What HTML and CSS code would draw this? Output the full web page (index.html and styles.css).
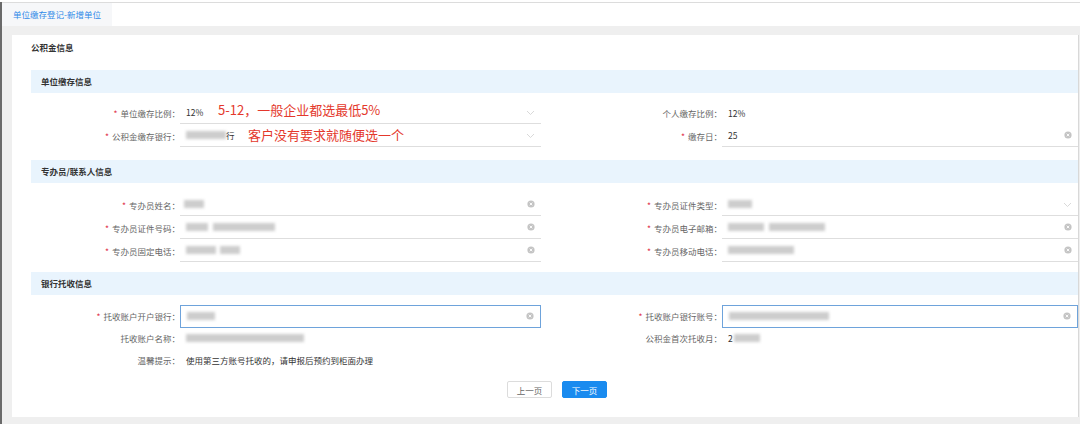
FILE: index.html
```html
<!DOCTYPE html>
<html lang="zh-CN">
<head>
    <meta charset="UTF-8">
    <meta name="viewport" content="width=device-width, initial-scale=1.0">
    <title>单位缴存登记-新增单位</title>
    <link rel="stylesheet" href="styles.css">
</head>
<body>
    <div class="frame">
        <!-- Tabs -->
        <div class="tab-bar">
            <div class="tab active">单位缴存登记-新增单位</div>
        </div>

        <div class="page">
            <div class="card">
                <div class="card-title">公积金信息</div>

                <!-- 单位缴存信息 -->
                <div class="section-head">单位缴存信息</div>
                <div class="form-grid">
                    <div class="label"><span class="req">*</span>单位缴存比例：</div>
                    <div class="field line">
                        <span class="value">12%</span>
                        <span class="note note-a">5-12，一般企业都选最低5%</span>
                        <svg class="chevron" width="9" height="6" viewBox="0 0 9 6"><polyline points="1,1 4.5,4.5 8,1" fill="none" stroke="#cfcfcf" stroke-width="0.8"/></svg>
                    </div>
                    <div class="label">个人缴存比例：</div>
                    <div class="field"><span class="value">12%</span></div>

                    <div class="label"><span class="req">*</span>公积金缴存银行：</div>
                    <div class="field line">
                        <span class="mask" style="width:40px"></span><span class="value">行</span>
                        <span class="note note-b">客户没有要求就随便选一个</span>
                        <svg class="chevron" width="9" height="6" viewBox="0 0 9 6"><polyline points="1,1 4.5,4.5 8,1" fill="none" stroke="#cfcfcf" stroke-width="0.8"/></svg>
                    </div>
                    <div class="label"><span class="req">*</span>缴存日：</div>
                    <div class="field line">
                        <span class="value">25</span>
                        <svg class="clear" width="8" height="8" viewBox="0 0 8 8"><circle cx="4" cy="4" r="3.6" fill="#c4c4c4"/><path d="M2.7 2.7 L5.3 5.3 M5.3 2.7 L2.7 5.3" stroke="#fff" stroke-width="0.9"/></svg>
                    </div>
                </div>

                <!-- 专办员/联系人信息 -->
                <div class="section-head">专办员/联系人信息</div>
                <div class="form-grid">
                    <div class="label"><span class="req">*</span>专办员姓名：</div>
                    <div class="field line">
                        <span class="mask" style="width:20px;margin-left:-2px"></span>
                        <svg class="clear" width="8" height="8" viewBox="0 0 8 8"><circle cx="4" cy="4" r="3.6" fill="#c4c4c4"/><path d="M2.7 2.7 L5.3 5.3 M5.3 2.7 L2.7 5.3" stroke="#fff" stroke-width="0.9"/></svg>
                    </div>
                    <div class="label"><span class="req">*</span>专办员证件类型：</div>
                    <div class="field line">
                        <span class="mask" style="width:24px"></span>
                        <svg class="chevron" width="9" height="6" viewBox="0 0 9 6"><polyline points="1,1 4.5,4.5 8,1" fill="none" stroke="#cfcfcf" stroke-width="0.8"/></svg>
                    </div>

                    <div class="label"><span class="req">*</span>专办员证件号码：</div>
                    <div class="field line">
                        <span class="mask" style="width:22px"></span><span class="mask" style="width:62px;margin-left:5px"></span>
                        <svg class="clear" width="8" height="8" viewBox="0 0 8 8"><circle cx="4" cy="4" r="3.6" fill="#c4c4c4"/><path d="M2.7 2.7 L5.3 5.3 M5.3 2.7 L2.7 5.3" stroke="#fff" stroke-width="0.9"/></svg>
                    </div>
                    <div class="label"><span class="req">*</span>专办员电子邮箱：</div>
                    <div class="field line">
                        <span class="mask" style="width:36px"></span><span class="mask" style="width:56px;margin-left:5px"></span>
                        <svg class="clear" width="8" height="8" viewBox="0 0 8 8"><circle cx="4" cy="4" r="3.6" fill="#c4c4c4"/><path d="M2.7 2.7 L5.3 5.3 M5.3 2.7 L2.7 5.3" stroke="#fff" stroke-width="0.9"/></svg>
                    </div>

                    <div class="label"><span class="req">*</span>专办员固定电话：</div>
                    <div class="field line">
                        <span class="mask" style="width:30px"></span><span class="mask" style="width:20px;margin-left:4px"></span>
                        <svg class="clear" width="8" height="8" viewBox="0 0 8 8"><circle cx="4" cy="4" r="3.6" fill="#c4c4c4"/><path d="M2.7 2.7 L5.3 5.3 M5.3 2.7 L2.7 5.3" stroke="#fff" stroke-width="0.9"/></svg>
                    </div>
                    <div class="label"><span class="req">*</span>专办员移动电话：</div>
                    <div class="field line">
                        <span class="mask" style="width:66px"></span>
                        <svg class="clear" width="8" height="8" viewBox="0 0 8 8"><circle cx="4" cy="4" r="3.6" fill="#c4c4c4"/><path d="M2.7 2.7 L5.3 5.3 M5.3 2.7 L2.7 5.3" stroke="#fff" stroke-width="0.9"/></svg>
                    </div>
                </div>

                <!-- 银行托收信息 -->
                <div class="section-head">银行托收信息</div>
                <div class="form-grid compact">
                    <div class="label"><span class="req">*</span>托收账户开户银行：</div>
                    <div class="field">
                        <div class="input-box">
                            <span class="mask" style="width:28px"></span>
                            <svg class="clear" width="8" height="8" viewBox="0 0 8 8"><circle cx="4" cy="4" r="3.6" fill="#c4c4c4"/><path d="M2.7 2.7 L5.3 5.3 M5.3 2.7 L2.7 5.3" stroke="#fff" stroke-width="0.9"/></svg>
                        </div>
                    </div>
                    <div class="label"><span class="req">*</span>托收账户银行账号：</div>
                    <div class="field">
                        <div class="input-box">
                            <span class="mask" style="width:100px"></span>
                            <svg class="clear" width="8" height="8" viewBox="0 0 8 8"><circle cx="4" cy="4" r="3.6" fill="#c4c4c4"/><path d="M2.7 2.7 L5.3 5.3 M5.3 2.7 L2.7 5.3" stroke="#fff" stroke-width="0.9"/></svg>
                        </div>
                    </div>

                    <div class="label">托收账户名称：</div>
                    <div class="field"><span class="mask" style="width:118px"></span></div>
                    <div class="label">公积金首次托收月：</div>
                    <div class="field"><span class="value">2</span><span class="mask" style="width:26px;margin-left:1px"></span></div>

                    <div class="label">温馨提示：</div>
                    <div class="field"><span class="value">使用第三方账号托收的，请申报后预约到柜面办理</span></div>
                </div>

                <div class="actions">
                    <button class="btn">上一页</button>
                    <button class="btn btn-primary">下一页</button>
                </div>
            </div>
        </div>
    </div>
</body>
</html>
```

FILE: styles.css
```css
body {
    margin: 0;
    padding: 2px 0 0 0;
    background: #fff;
    font-family: "Noto Sans CJK SC", "Noto Sans", sans-serif;
    font-size: 8.5px;
    color: #333;
}

.frame {
    width: 1078px;
    height: 422px;
    border-left: 2px solid #6a6a6a;
    display: flex;
    flex-direction: column;
}

/* Tabs */
.tab-bar {
    height: 23px;
    border-top: 1px solid #dcdcdc;
    display: flex;
    background: #fff;
}

.tab {
    padding: 0 11px;
    line-height: 23px;
    background: #f6f7f9;
    color: #2f8ae8;
}

/* Page + card */
.page {
    flex: 1;
    background: #efefef;
    padding: 9px 0 5px 10px;
}

.card {
    width: 1047px;
    height: 382px;
    background: #fff;
    padding-left: 19px;
    border-right: 1px solid #d8d8d8;
}

.card-title {
    height: 24px;
    line-height: 24px;
    margin-bottom: 11px;
    font-weight: bold;
    color: #333;
}

.section-head {
    height: 23px;
    line-height: 23px;
    padding-left: 10px;
    background: #e9f4fd;
    font-weight: bold;
    color: #333;
}

/* Form grid */
.form-grid {
    display: grid;
    grid-template-columns: 149px 361px 181px 356px;
    grid-auto-rows: 23px;
    padding: 8px 0 13px 0;
}

.section-head + .form-grid + .section-head + .form-grid {
    padding: 10px 0 10px 0;
}

.form-grid.compact {
    grid-auto-rows: 22px;
    padding: 10px 0 13px 0;
}

.label {
    display: flex;
    align-items: center;
    justify-content: flex-end;
    color: #666;
    white-space: nowrap;
}

.req {
    color: #e0334a;
    margin-right: 3px;
}

.field {
    position: relative;
    display: flex;
    align-items: center;
    padding-left: 6px;
    box-sizing: border-box;
}

.field.line {
    border-bottom: 1px solid #dedede;
}

.value {
    color: #333;
    white-space: nowrap;
}

.mask {
    display: inline-block;
    height: 8px;
    background: #cdcdcd;
    filter: blur(1.6px);
}

.chevron {
    position: absolute;
    right: 6px;
    top: 9px;
}

.clear {
    position: absolute;
    right: 6px;
    top: 7px;
}

.input-box {
    position: relative;
    flex: 1;
    height: 21px;
    margin-left: -6px;
    padding-left: 6px;
    border: 1px solid #6ea3db;
    display: flex;
    align-items: center;
}

.input-box .clear {
    top: 6px;
}

/* Red annotations */
.note {
    position: absolute;
    color: #e4382c;
    font-size: 13px;
    white-space: nowrap;
}

.note-a {
    left: 38px;
    top: -1px;
}

.note-b {
    left: 68px;
    top: 1px;
}

/* Buttons */
.actions {
    display: flex;
    justify-content: center;
    gap: 10px;
    padding-left: 5px;
}

.btn {
    width: 45px;
    height: 17px;
    padding: 0;
    font-family: inherit;
    font-size: 8.5px;
    border: 1px solid #dcdcdc;
    border-radius: 2px;
    background: #fff;
    color: #666;
}

.btn-primary {
    background: #1a8bef;
    border-color: #1a8bef;
    color: #fff;
}
```
